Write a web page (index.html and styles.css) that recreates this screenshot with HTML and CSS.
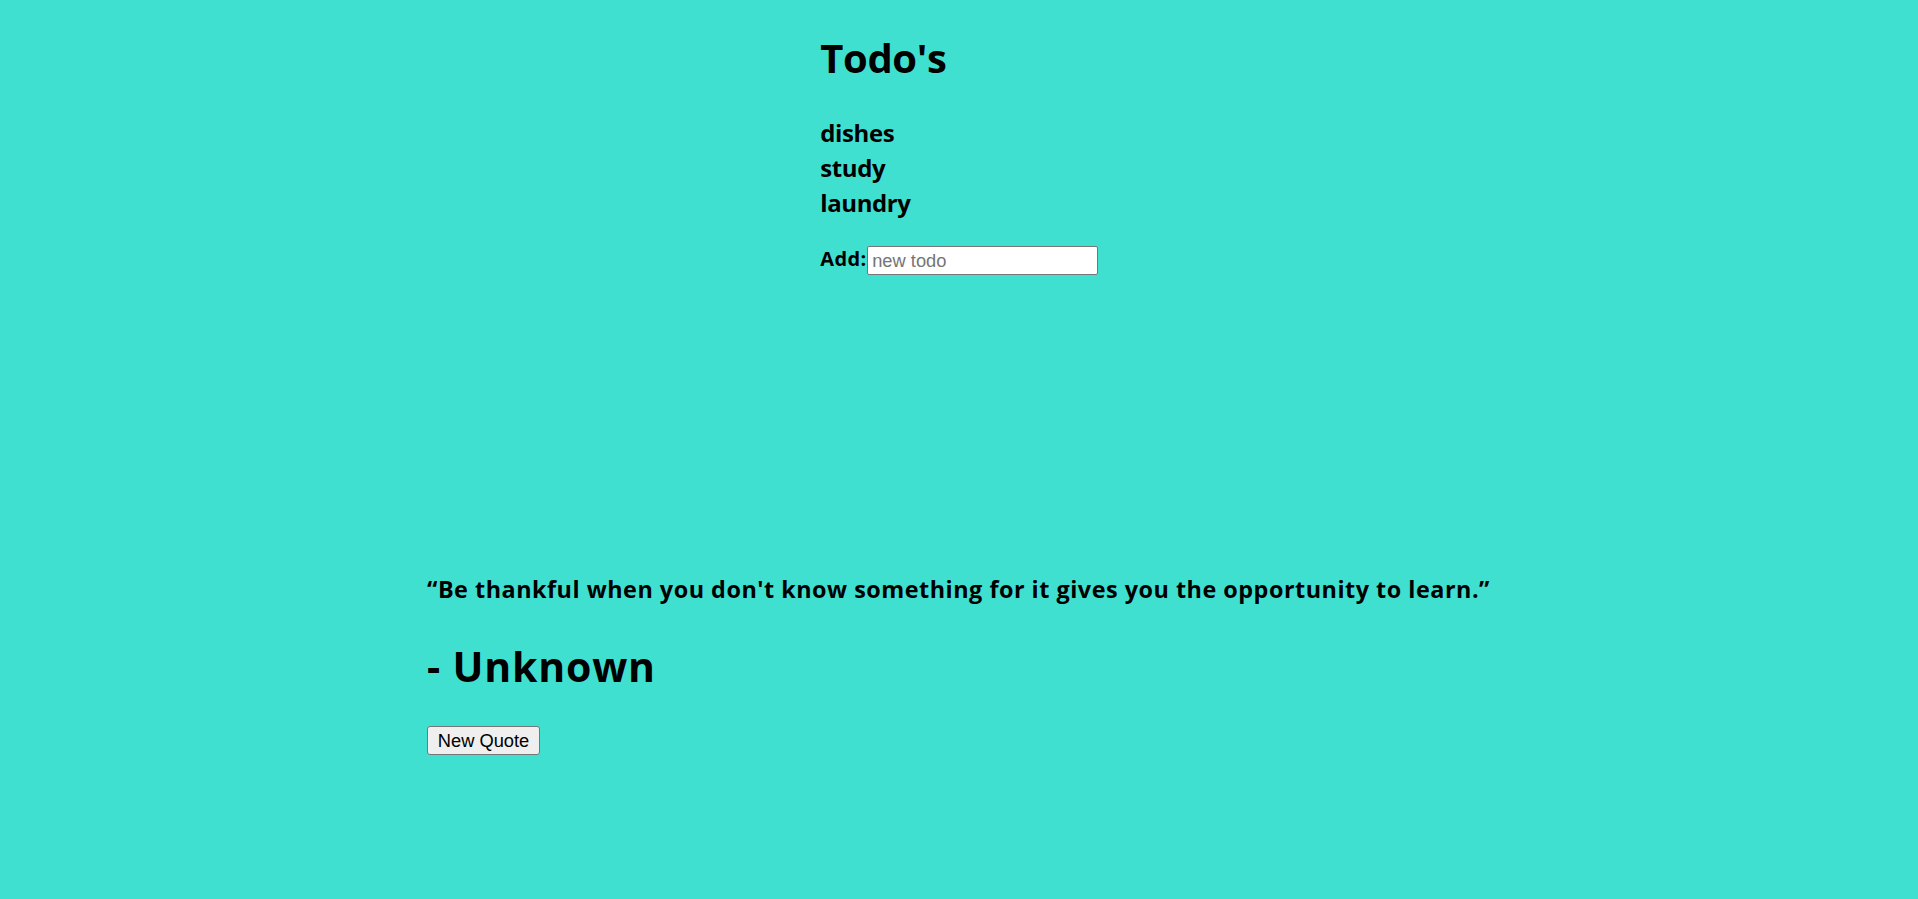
FILE: index.html
```html
<!DOCTYPE html>
<html lang="en">
<head>
<meta charset="utf-8">
<title>Todo's</title>
<link rel="stylesheet" href="styles.css">
</head>
<body>
<div class="page">
  <section class="todos">
    <h1 class="title">Todo's</h1>
    <ul class="todo-list">
      <li>dishes</li>
      <li>study</li>
      <li>laundry</li>
    </ul>
    <form class="add-row">
      <label class="add-label" for="newtodo">Add:</label><input class="add-input" id="newtodo" type="text" placeholder="new todo">
    </form>
  </section>
  <section class="quote-box">
    <h3 class="quote">“Be thankful when you don't know something for it gives you the opportunity to learn.”</h3>
    <h1 class="author">- Unknown</h1>
    <button class="new-quote" type="button">New Quote</button>
  </section>
</div>
</body>
</html>
```
FILE: styles.css
```css
html, body {
  margin: 0;
  padding: 0;
  background: #40e0d0;
}
body {
  font-family: "Open Sans", "Noto Sans", sans-serif;
  color: #000;
  min-height: 899px;
}
.page {
  display: flex;
  flex-direction: column;
  align-items: center;
}
.todos {
  width: fit-content;
  padding-top: 31px;
}
.title {
  margin: 0;
  font-size: 40px;
  line-height: 53px;
  font-weight: 700;
  letter-spacing: -0.4px;
}
.todo-list {
  list-style: none;
  margin: 31px 0 0;
  padding: 0;
  font-size: 24px;
  line-height: 35px;
  font-weight: 700;
  letter-spacing: -0.4px;
}
.add-row {
  display: flex;
  align-items: flex-start;
  margin: 26px 0 0;
}
.add-label {
  font-size: 20px;
  line-height: 26px;
  font-weight: 700;
  letter-spacing: 0.4px;
}
.add-input {
  box-sizing: border-box;
  width: 231px;
  height: 29px;
  margin: 0;
  padding: 1px 4.5px;
  border: 1px solid #767676;
  border-radius: 2px;
  background: #fff;
  font-family: "Liberation Sans", Arial, sans-serif;
  font-size: 18.3px;
  color: #000;
}
.add-input::placeholder {
  color: #757575;
}
.quote-box {
  width: 1064px;
  margin-top: 299px;
}
.quote {
  margin: 0;
  font-size: 23.4px;
  line-height: 31px;
  font-weight: 700;
  letter-spacing: 0.5px;
  white-space: nowrap;
}
.author {
  margin: 35px 0 0;
  font-size: 41px;
  line-height: 53px;
  font-weight: 700;
  letter-spacing: 0.8px;
}
.new-quote {
  box-sizing: border-box;
  display: block;
  width: 113px;
  height: 29px;
  margin: 33px 0 0;
  padding: 0;
  border: 1px solid #767676;
  border-radius: 3px;
  background: #efefef;
  font-family: "Liberation Sans", Arial, sans-serif;
  font-size: 18.3px;
  color: #000;
}
```
